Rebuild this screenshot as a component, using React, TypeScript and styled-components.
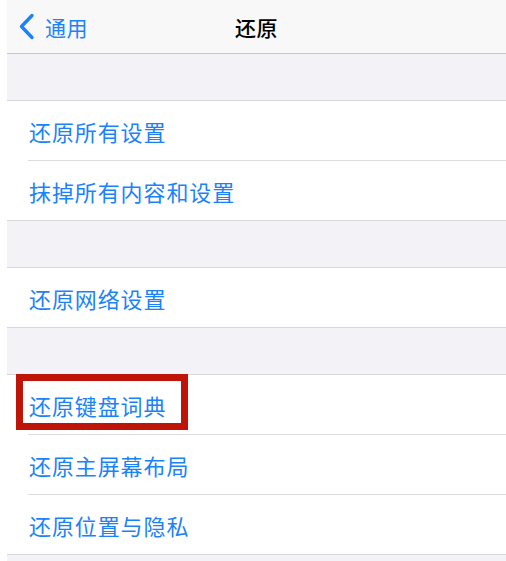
import React from "react";
import styled, { createGlobalStyle } from "styled-components";

const GlobalStyle = createGlobalStyle`
  html, body {
    margin: 0;
    padding: 0;
    background: #ffffff;
  }
  body {
    font-family: "Noto Sans CJK SC", "Noto Sans", sans-serif;
  }
`;

const Page = styled.div`
  margin-left: 7px;
  width: 499px;
  height: 561px;
  overflow: hidden;
  background: #f2f2f7;
`;

const NavBar = styled.header`
  height: 53px;
  display: grid;
  grid-template-columns: 1fr auto 1fr;
  align-items: center;
  background: #f8f8f8;
  border-bottom: 1px solid #c6c6c8;
`;

const BackButton = styled.a`
  display: flex;
  align-items: center;
  gap: 10px;
  padding-left: 11px;
  color: #1a82fb;
  font-size: 21px;
  letter-spacing: 0.5px;
  text-decoration: none;
  cursor: pointer;
`;

const Title = styled.h1`
  margin: 0;
  font-size: 21px;
  font-weight: 500;
  letter-spacing: 0.5px;
  color: #000000;
`;

const Spacer = styled.div`
  height: 46px;
  border-bottom: 1px solid #d8d8dc;
`;

const Group = styled.ul`
  margin: 0;
  padding: 0;
  list-style: none;
  background: #ffffff;
  border-bottom: 1px solid #d8d8dc;
`;

const Row = styled.li`
  position: relative;
  height: 59px;
  display: flex;
  align-items: center;
  padding-left: 22px;
  color: #1a82fb;
  font-size: 22px;
  letter-spacing: 0.9px;
  cursor: pointer;

  & + & {
    border-top: 1px solid #dcdce0;
  }
  & + &::before {
    content: "";
    position: absolute;
    left: 0;
    top: -1px;
    width: 21px;
    height: 1px;
    background: #ffffff;
  }
`;

const Highlight = styled.span`
  position: absolute;
  left: 9px;
  top: -1px;
  width: 172px;
  height: 56px;
  box-sizing: border-box;
  border: 7px solid #bf1509;
  pointer-events: none;
`;

const Chevron = () => (
  <svg width="17" height="27" viewBox="0 0 17 27" fill="none">
    <path
      d="M14 2.5 L3.5 13.5 L14 24.5"
      stroke="#1a82fb"
      strokeWidth="3.4"
      strokeLinecap="round"
      strokeLinejoin="round"
    />
  </svg>
);

type Item = { label: string; marked?: boolean };

const groups: Item[][] = [
  [{ label: "还原所有设置" }, { label: "抹掉所有内容和设置" }],
  [{ label: "还原网络设置" }],
  [
    { label: "还原键盘词典", marked: true },
    { label: "还原主屏幕布局" },
    { label: "还原位置与隐私" },
  ],
];

export default function App() {
  return (
    <>
      <GlobalStyle />
      <Page>
        <NavBar>
          <BackButton>
            <Chevron />
            通用
          </BackButton>
          <Title>还原</Title>
          <div />
        </NavBar>
        {groups.map((items, gi) => (
          <React.Fragment key={gi}>
            <Spacer />
            <Group>
              {items.map((item) => (
                <Row key={item.label}>
                  {item.label}
                  {item.marked && <Highlight />}
                </Row>
              ))}
            </Group>
          </React.Fragment>
        ))}
        <Spacer />
      </Page>
    </>
  );
}
